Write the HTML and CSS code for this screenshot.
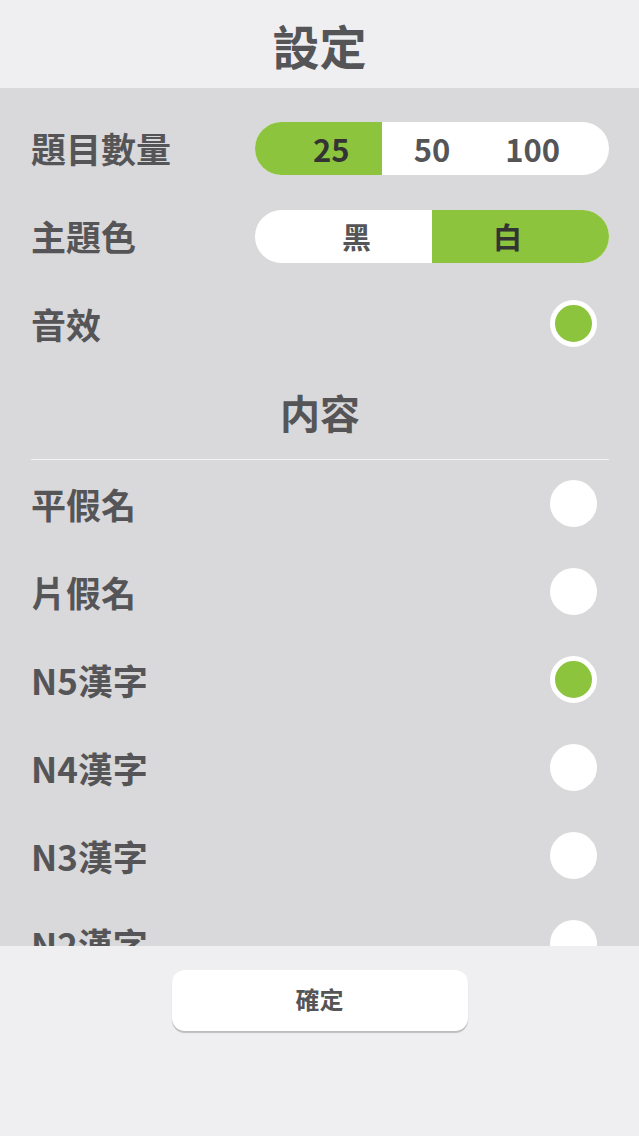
FILE: index.html
```html
<!DOCTYPE html>
<html lang="zh-Hant">
<head>
<meta charset="utf-8">
<title>設定</title>
<link rel="stylesheet" href="styles.css">
</head>
<body>
<div class="app">
  <header class="header"><h1 class="title">設定</h1></header>
  <main class="main">
    <div class="row">
      <span class="label">題目數量</span>
      <div class="pill">
        <span class="seg on">25</span>
        <span class="seg">50</span>
        <span class="seg">100</span>
      </div>
    </div>
    <div class="row">
      <span class="label">主題色</span>
      <div class="pill">
        <span class="seg cjk">黑</span>
        <span class="seg cjk on">白</span>
      </div>
    </div>
    <div class="row">
      <span class="label">音效</span>
      <span class="radio on"></span>
    </div>
    <div class="section"><h2 class="section-title">内容</h2></div>
    <div class="row">
      <span class="label">平假名</span>
      <span class="radio"></span>
    </div>
    <div class="row">
      <span class="label">片假名</span>
      <span class="radio"></span>
    </div>
    <div class="row">
      <span class="label">N5漢字</span>
      <span class="radio on"></span>
    </div>
    <div class="row">
      <span class="label">N4漢字</span>
      <span class="radio"></span>
    </div>
    <div class="row">
      <span class="label">N3漢字</span>
      <span class="radio"></span>
    </div>
    <div class="row">
      <span class="label">N2漢字</span>
      <span class="radio"></span>
    </div>
  </main>
  <footer class="footer"><button class="confirm">確定</button></footer>
</div>
</body>
</html>
```
FILE: styles.css
```css
* { box-sizing: border-box; }
html, body { margin: 0; padding: 0; }
body {
  font-family: "Noto Sans CJK TC", "Noto Sans", sans-serif;
  color: #555558;
  background: #efeef0;
}
.app {
  width: 639px;
  height: 1136px;
  display: flex;
  flex-direction: column;
  overflow: hidden;
}
.header {
  height: 88px;
  flex: none;
  background: #efeef0;
  display: flex;
  align-items: center;
  justify-content: center;
}
.title {
  margin: 0;
  font-size: 47px;
  font-weight: 700;
  line-height: 1;
}
.main {
  flex: 1;
  background: #d9d8da;
  overflow: hidden;
  padding: 16px 30px 0 31px;
}
.row {
  height: 88px;
  display: flex;
  align-items: center;
  justify-content: space-between;
}
.label {
  font-size: 35px;
  font-weight: 700;
  line-height: 1;
  margin-top: -2px;
}
.pill {
  width: 354px;
  height: 53px;
  border-radius: 27px;
  background: #fff;
  display: flex;
  padding: 0 26px;
  overflow: hidden;
}
.seg {
  flex: 1;
  display: flex;
  align-items: center;
  justify-content: center;
  font-size: 31px;
  font-weight: 700;
  color: #555558;
}
.seg.cjk { font-size: 29px; }
.seg:first-child { margin-left: -26px; padding-left: 26px; }
.seg:last-child { margin-right: -26px; padding-right: 26px; }
.seg.on { background: #8cc43d; color: #333; }
.radio {
  width: 47px;
  height: 47px;
  border-radius: 50%;
  background: #fff;
  margin-right: 12px;
  margin-top: -2px;
}
.radio.on {
  background: #8cc43d;
  border: 5.5px solid #fff;
}
.section {
  height: 92px;
  border-bottom: 1.5px solid #f3f3f4;
  display: flex;
  align-items: center;
  justify-content: center;
}
.section-title {
  margin: 0;
  font-size: 40px;
  font-weight: 700;
  line-height: 1;
  margin-top: -4px;
}
.footer {
  height: 190px;
  flex: none;
  background: #efeef0;
  display: flex;
  justify-content: center;
  padding-top: 24px;
}
.confirm {
  width: 296px;
  height: 61px;
  border: none;
  border-radius: 13px;
  background: #fff;
  box-shadow: 0 2px 1px #bdbcbf;
  font-family: inherit;
  font-size: 24px;
  font-weight: 700;
  color: #555558;
  padding: 0 0 4px;
}
```
